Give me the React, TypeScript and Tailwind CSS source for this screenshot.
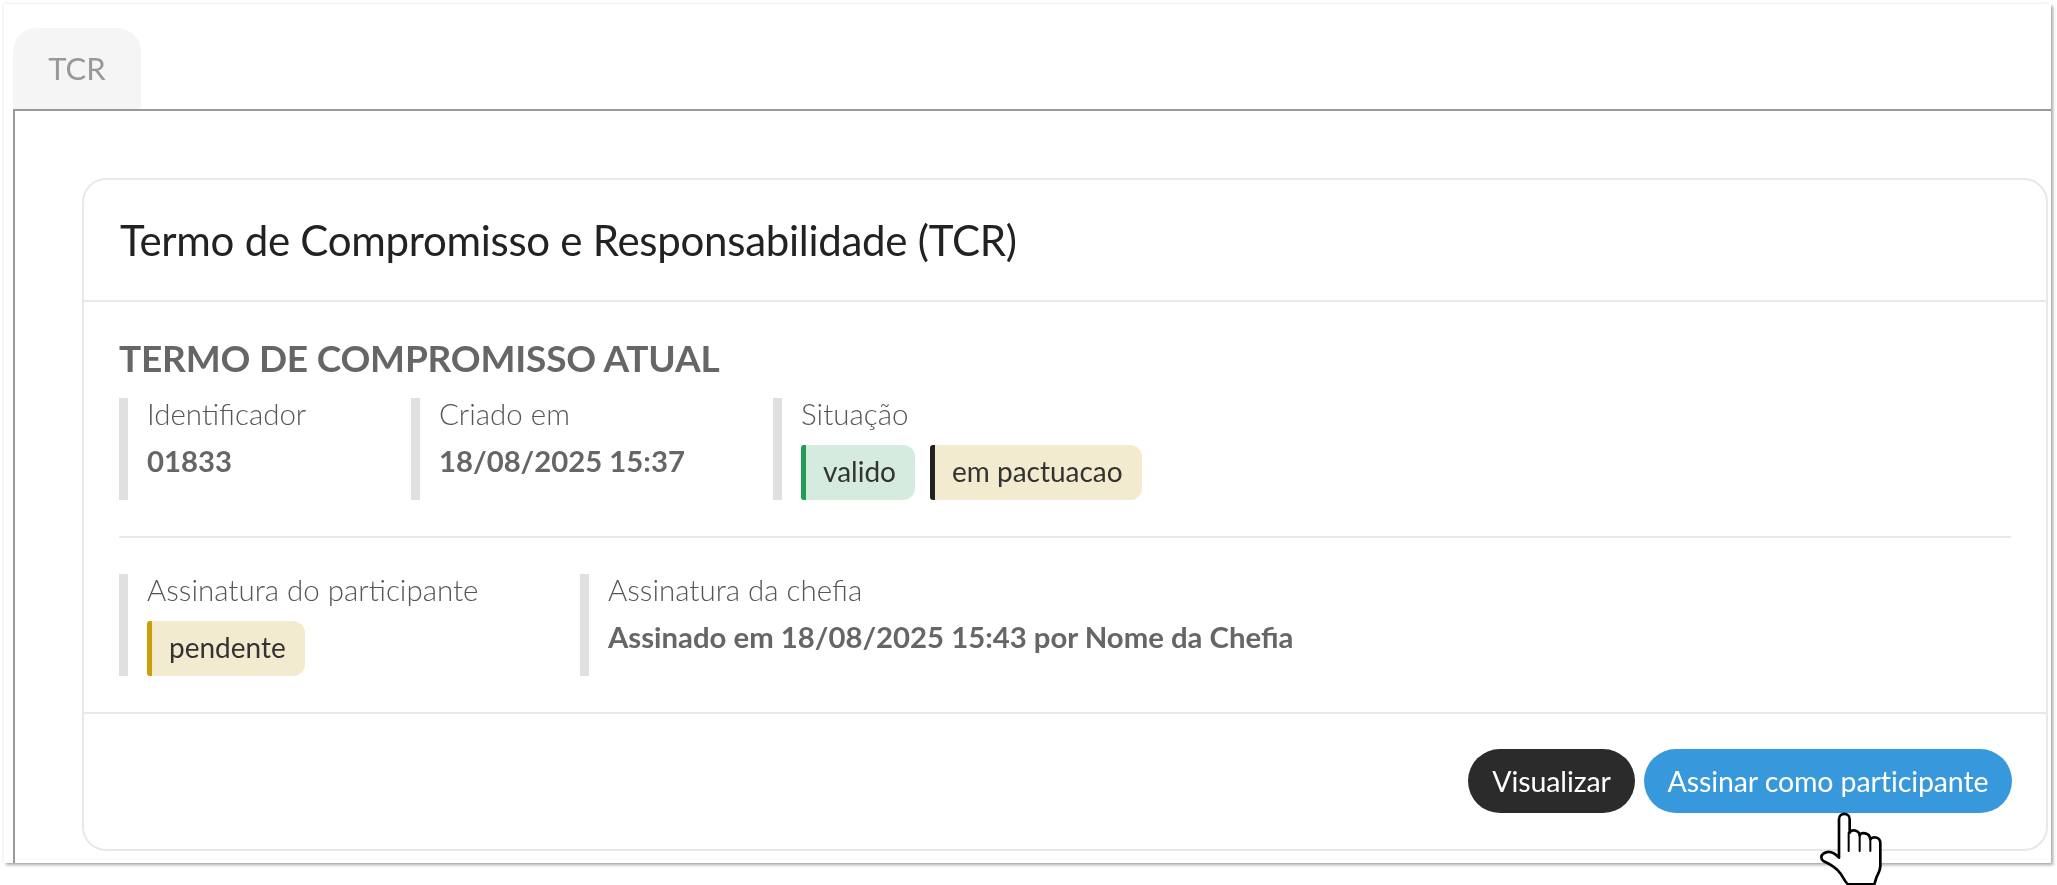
type BadgeProps = {
  label: string;
  stripe: string;
  fill: string;
};

function Badge({ label, stripe, fill }: BadgeProps) {
  return (
    <span
      className={`flex h-[55px] items-center rounded-r-[12px] rounded-l-[3px] border-l-[5px] pb-[3px] pl-[17px] pr-[19px] text-[28px] text-[#333] ${stripe} ${fill}`}
    >
      {label}
    </span>
  );
}

function Field({ label, className, children }: { label: string; className: string; children: React.ReactNode }) {
  return (
    <div className={`flex h-[102px] shrink-0 flex-col border-l-[9px] border-[#e0e0e0] pl-[19px] ${className}`}>
      <span className="text-[29.5px] leading-[32px] font-light text-[#555]">{label}</span>
      {children}
    </div>
  );
}

function Value({ children }: { children: React.ReactNode }) {
  return <span className="mt-[13px] text-[29.3px] leading-[36px] font-bold text-[#666]">{children}</span>;
}

function HandCursor() {
  return (
    <svg
      className="absolute left-[174px] top-[62px] h-[75px] w-[65px]"
      viewBox="115 60 195 225"
      fill="#fff"
      stroke="#000"
      strokeWidth="8"
      strokeLinejoin="round"
      strokeLinecap="round"
    >
      <path d="M178 85c0-22 32-22 32 0v40c4-10 28-10 30 8 4-10 30-10 32 12 6-10 30-8 30 12v68c0 14-8 25-12 35-2 8-4 14-6 20h-79c-8-6-14-20-22-32-10-14-30-28-52-38-8-6-8-16 0-22 14-10 30-6 47 12z" />
      <path d="M207 125v55M240 133v47M272 145v35" fill="none" strokeWidth="6" />
    </svg>
  );
}

export default function App() {
  return (
    <div className="h-[885px] w-[2057px] overflow-hidden bg-white pl-[4px] pt-[4px] font-['Lato',sans-serif] blur-[0.4px]">
      <div className="flex h-[859px] w-[2047px] flex-col bg-white pl-[9px] pt-[24px] shadow-[2px_2px_3px_rgba(0,0,0,0.35),-1px_-1px_3px_rgba(0,0,0,0.06)]">
        <div className="flex">
          <div className="flex h-[81px] w-[128px] items-center justify-center rounded-t-[24px] bg-[#f5f5f5] text-[31px] text-[#999]">
            TCR
          </div>
        </div>
        <div className="flex-1 border-l-2 border-t-2 border-[#9a9a9a] pb-[12px] pl-[67px] pr-[3px] pt-[67px]">
          <div className="flex h-full flex-col rounded-[24px] border-2 border-[#e8e8e8]">
            <div className="flex h-[122px] shrink-0 items-center border-b-2 border-[#e8e8e8] pl-[36px] text-[42px] tracking-[-0.27px] text-[#222]">
              Termo de Compromisso e Responsabilidade (TCR)
            </div>
            <div className="flex-1 pl-[35px] pr-[35px]">
              <h2 className="mt-[34px] text-[37px] leading-[44px] font-bold tracking-[-0.2px] text-[#666]">
                TERMO DE COMPROMISSO ATUAL
              </h2>
              <div className="mt-[18px] flex">
                <Field label="Identificador" className="w-[292px]">
                  <Value>01833</Value>
                </Field>
                <Field label="Criado em" className="w-[362px]">
                  <Value>18/08/2025 15:37</Value>
                </Field>
                <Field label="Situação" className="flex-1">
                  <div className="mt-[15px] flex gap-[15px]">
                    <Badge label="valido" stripe="border-[#1f9d55]" fill="bg-[#d5ebdd]" />
                    <Badge label="em pactuacao" stripe="border-[#222]" fill="bg-[#f3ebcf]" />
                  </div>
                </Field>
              </div>
              <div className="mt-[36px] h-[2px] bg-[#e8e8e8]" />
              <div className="mt-[36px] flex">
                <Field label="Assinatura do participante" className="w-[461px]">
                  <div className="mt-[15px] flex">
                    <Badge label="pendente" stripe="border-[#c99f0a]" fill="bg-[#f3ebcf]" />
                  </div>
                </Field>
                <Field label="Assinatura da chefia" className="flex-1">
                  <Value>Assinado em 18/08/2025 15:43 por Nome da Chefia</Value>
                </Field>
              </div>
            </div>
            <div className="flex h-[137px] shrink-0 justify-end gap-[9px] border-t-2 border-[#e8e8e8] pr-[34px] pt-[35px]">
              <button className="h-[64px] w-[167px] rounded-full bg-[#2b2b2b] text-[28.5px] tracking-[-0.1px] text-white">Visualizar</button>
              <button className="relative h-[64px] w-[368px] rounded-full bg-[#3798dc] text-[28.5px] tracking-[-0.1px] text-white">
                Assinar como participante
                <HandCursor />
              </button>
            </div>
          </div>
        </div>
      </div>
    </div>
  );
}
